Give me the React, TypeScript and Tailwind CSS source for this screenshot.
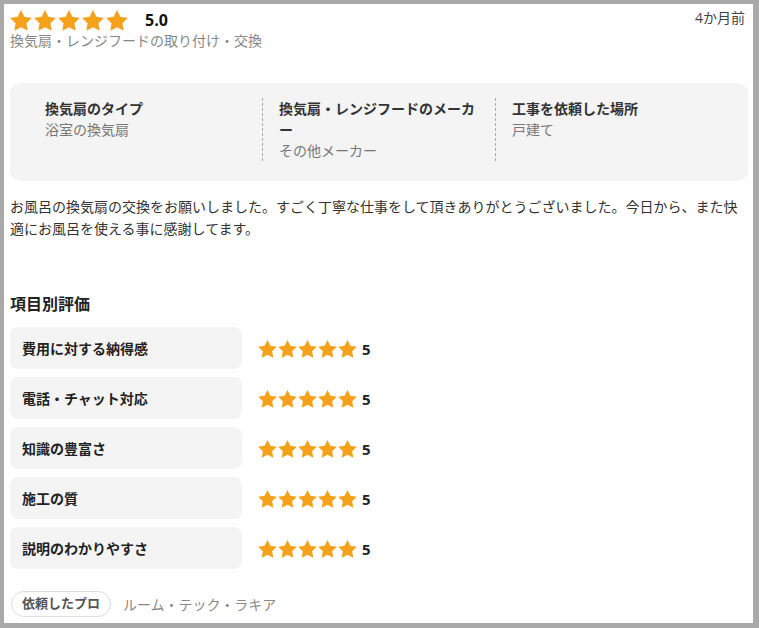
const FONT = { fontFamily: '"Open Sans", "Noto Sans CJK JP", sans-serif' };

const Star = ({ className }: { className: string }) => (
  <svg viewBox="2 2 20 19.3" className={className} fill="#f6a11a">
    <path d="M12 2l3.09 6.26L22 9.27l-5 4.87 1.18 6.88L12 17.77l-6.18 3.25L7 14.14 2 9.27l6.91-1.01L12 2z" />
  </svg>
);

const details = [
  { title: "換気扇のタイプ", value: "浴室の換気扇" },
  { title: "換気扇・レンジフードのメーカー", value: "その他メーカー" },
  { title: "工事を依頼した場所", value: "戸建て" },
];

const ratings = [
  { label: "費用に対する納得感", score: 5 },
  { label: "電話・チャット対応", score: 5 },
  { label: "知識の豊富さ", score: 5 },
  { label: "施工の質", score: 5 },
  { label: "説明のわかりやすさ", score: 5 },
];

export default function App() {
  return (
    <div
      className="w-[759px] h-[628px] bg-[#a9a9a9] pt-[4px] pl-[4px] pr-[6px] pb-[5px]"
      style={FONT}
    >
      <div className="h-full bg-white pl-[6px] pr-[5px] pt-[5px] overflow-hidden">
        {/* ヘッダー */}
        <div className="flex items-start justify-between">
          <div>
            <div className="flex h-[22px] items-center">
              <div className="flex gap-[2px]">
                {[0, 1, 2, 3, 4].map((i) => (
                  <Star key={i} className="h-[21px] w-[22px]" />
                ))}
              </div>
              <span className="ml-[17px] text-[16px] font-bold leading-[22px] text-[#111]">
                5.0
              </span>
            </div>
            <p className="text-[14px] leading-[20px] text-[#888]">
              換気扇・レンジフードの取り付け・交換
            </p>
          </div>
          <span className="mt-[-1px] pr-[3px] text-[14px] leading-[20px] text-[#444]">
            4か月前
          </span>
        </div>

        {/* 依頼内容 */}
        <div className="mt-[32px] flex rounded-[10px] bg-[#f4f4f4] px-[19px] pt-[15px] pb-[20px]">
          {details.map((d, i) => (
            <div
              key={d.title}
              className={
                i === 0
                  ? "w-[233px] px-4 text-[14px] leading-[21px]"
                  : "w-[233px] border-l border-dashed border-[#aaa] px-4 text-[14px] leading-[21px]"
              }
            >
              <p className="font-bold text-[#333]">{d.title}</p>
              <p className="text-[#777]">{d.value}</p>
            </div>
          ))}
        </div>

        <p className="mt-[15px] text-[14px] leading-[22px] text-[#333]">
          お風呂の換気扇の交換をお願いしました。すごく丁寧な仕事をして頂きありがとうございました。今日から、また快適にお風呂を使える事に感謝してます。
        </p>

        {/* 項目別評価 */}
        <h3 className="mt-[52px] text-[16px] font-bold leading-[24px] text-[#222]">
          項目別評価
        </h3>
        <div className="mt-[11px] flex flex-col gap-[8px]">
          {ratings.map((r) => (
            <div key={r.label} className="flex items-center">
              <div className="flex h-[42px] w-[232px] items-center rounded-[8px] bg-[#f4f4f4] px-3 text-[14px] font-bold text-[#222]">
                {r.label}
              </div>
              <div className="ml-[16px] mt-[2px] flex gap-px">
                {[0, 1, 2, 3, 4].map((i) => (
                  <Star key={i} className="h-[18px] w-[19px]" />
                ))}
              </div>
              <span className="ml-[5px] mt-[3px] text-[15px] font-bold text-[#222]">
                {r.score}
              </span>
            </div>
          ))}
        </div>

        {/* 依頼したプロ */}
        <div className="mt-[22px] flex items-center">
          <span className="ml-px flex h-[26px] items-center rounded-full border border-[#ddd] px-[10px] text-[13px] font-bold text-[#555]">
            依頼したプロ
          </span>
          <span className="ml-[12px] text-[14px] text-[#888]">
            ルーム・テック・ラキア
          </span>
        </div>
      </div>
    </div>
  );
}
